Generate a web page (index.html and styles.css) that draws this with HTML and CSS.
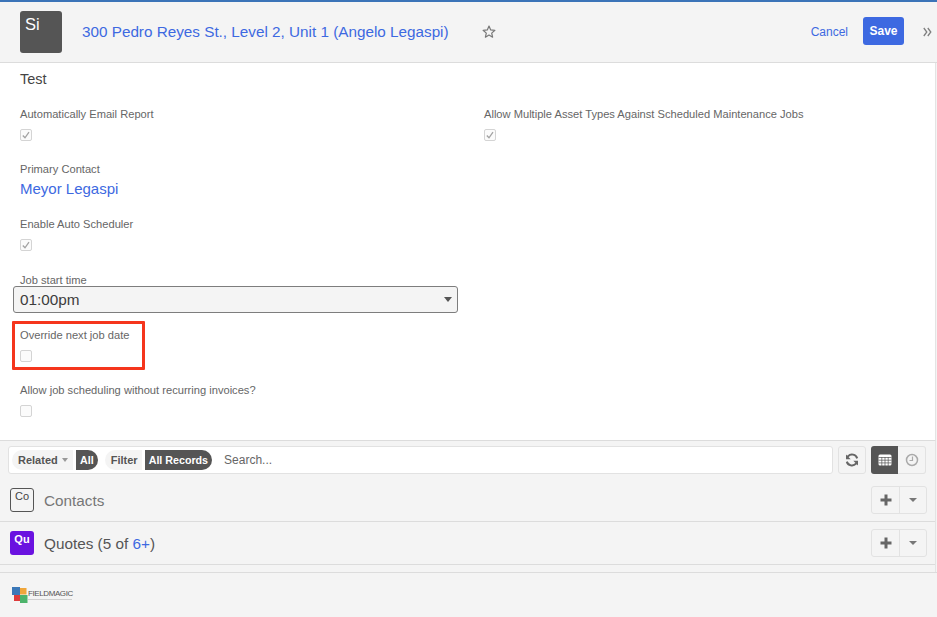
FILE: index.html
```html
<!DOCTYPE html>
<html lang="en">
<head>
<meta charset="utf-8">
<title>Site</title>
<link rel="stylesheet" href="styles.css">
</head>
<body>
<header class="topbar">
  <div class="avatar">Si</div>
  <a class="title">300 Pedro Reyes St., Level 2, Unit 1 (Angelo Legaspi)</a>
  <svg class="star" viewBox="0 0 14 14" width="14" height="14"><path d="M7 1l1.700 3.900 4.200.4-3.200 2.800.9 4.100L7 10.100l-3.600 2.100.9-4.100L1.100 5.300l4.200-.4z" fill="none" stroke="#777" stroke-width="1.200" stroke-linejoin="round"/></svg>
  <div class="actions">
    <a class="cancel">Cancel</a>
    <button class="save">Save</button>
    <svg class="chev" viewBox="0 0 9 10" width="9" height="10"><path d="M0.800 1l3 4-3 4M4.800 1l3 4-3 4" fill="none" stroke="#808080" stroke-width="1.300"/></svg>
  </div>
</header>
<main class="form">
  <div class="test">Test</div>
  <div class="grid">
    <div class="col">
      <div class="field">
        <label>Automatically Email Report</label>
        <span class="check"><svg viewBox="0 0 12 12" width="12" height="12"><path d="M2.800 6.500l2.200 2.300 4-5.600" fill="none" stroke="#a2a2a2" stroke-width="1.300"/></svg></span>
      </div>
      <div class="field">
        <label>Primary Contact</label>
        <a class="contact">Meyor Legaspi</a>
      </div>
      <div class="field">
        <label>Enable Auto Scheduler</label>
        <span class="check"><svg viewBox="0 0 12 12" width="12" height="12"><path d="M2.800 6.500l2.200 2.300 4-5.600" fill="none" stroke="#a2a2a2" stroke-width="1.300"/></svg></span>
      </div>
      <div class="field select-field">
        <label>Job start time</label>
        <div class="select">01:00pm<span class="caret"></span></div>
      </div>
      <div class="field">
        <label>Override next job date</label>
        <span class="check"></span>
        <span class="redbox"></span>
      </div>
      <div class="field">
        <label>Allow job scheduling without recurring invoices?</label>
        <span class="check"></span>
      </div>
    </div>
    <div class="col">
      <div class="field">
        <label>Allow Multiple Asset Types Against Scheduled Maintenance Jobs</label>
        <span class="check"><svg viewBox="0 0 12 12" width="12" height="12"><path d="M2.800 6.500l2.200 2.300 4-5.600" fill="none" stroke="#a2a2a2" stroke-width="1.300"/></svg></span>
      </div>
    </div>
  </div>
</main>
<section class="related">
  <div class="toolbar">
    <div class="searchbar">
      <span class="pill-l">Related<span class="mini-caret"></span></span><span class="pill-r">All</span>
      <span class="pill-l filter">Filter</span><span class="pill-r">All Records</span>
      <span class="search">Search...</span>
    </div>
    <button class="tool refresh"><svg viewBox="0 0 14 14" width="14" height="14"><path d="M12.200 5.400A5.400 5.400 0 0 0 3 3.300L1.800 4.500M1.800 8.600A5.400 5.400 0 0 0 11 10.700l1.200-1.200" fill="none" stroke="#666" stroke-width="2"/><path d="M1 1.500v4.700h4.700zM13 12.500V7.800H8.300z" fill="#666"/></svg></button>
    <div class="toggle">
      <span class="tg on"><svg viewBox="0 0 14 12" width="14" height="12"><rect x="0.500" y="0.500" width="13" height="11" rx="1.500" fill="#fff"/><path d="M0.500 3.500h13M0.500 6.200h13M0.500 8.900h13M3.800 3v9M7 3v9M10.200 3v9" stroke="#555" stroke-width="0.700"/></svg></span>
      <span class="tg"><svg viewBox="0 0 14 14" width="14" height="14"><circle cx="7" cy="7" r="5.500" fill="none" stroke="#aaa" stroke-width="1.500"/><path d="M7.500 3.500v4H4.500" fill="none" stroke="#aaa" stroke-width="1.200"/></svg></span>
    </div>
  </div>
  <div class="rel-row first">
    <span class="tile outline">Co</span>
    <span class="rel-name muted">Contacts</span>
    <div class="split"><span class="sp"><svg viewBox="0 0 12 12" width="12" height="12"><path d="M6 0.500v11M0.500 6h11" stroke="#666" stroke-width="3"/></svg></span><span class="sp"><span class="caret small"></span></span></div>
  </div>
  <div class="rel-row">
    <span class="tile purple">Qu</span>
    <span class="rel-name">Quotes (5 of <a>6+</a>)</span>
    <div class="split"><span class="sp"><svg viewBox="0 0 12 12" width="12" height="12"><path d="M6 0.500v11M0.500 6h11" stroke="#666" stroke-width="3"/></svg></span><span class="sp"><span class="caret small"></span></span></div>
  </div>
</section>
<footer class="footer">
  <div class="logo">
    <svg viewBox="0 0 16 16" width="16" height="16"><rect x="0" y="0" width="8" height="8" fill="#3b78b8"/><rect x="8" y="1" width="6.500" height="6.500" fill="#f0a63a"/><rect x="2" y="8" width="6" height="6" fill="#dd3b3b"/><rect x="8" y="8" width="7.500" height="8" fill="#4cb36a"/></svg>
    <div class="logo-text"><span class="logo-name">FIELDMAGIC</span><span class="logo-sub"></span></div>
  </div>
</footer>
</body>
</html>
```
FILE: styles.css
```css
* { box-sizing: border-box; }
html, body { margin: 0; padding: 0; }
body {
  width: 937px;
  height: 617px;
  overflow: hidden;
  background: #f4f4f4;
  font-family: "Liberation Sans", Arial, sans-serif;
  color: #444;
  display: flex;
  flex-direction: column;
}
a { color: #3d69e1; text-decoration: none; }
.topbar {
  height: 63px;
  flex: none;
  border-top: 2px solid #3b74b8;
  border-bottom: 1px solid #dcdcdc;
  background: #f4f4f4;
  display: flex;
  align-items: center;
  padding: 0 5px 0 20px;
}
.avatar {
  width: 42px;
  height: 42px;
  margin-bottom: 1px;
  background: #555;
  border-radius: 3px;
  color: #fff;
  font-size: 16.500px;
  line-height: 20px;
  padding: 3px 0 0 5px;
}
.title { margin: 0 0 2px 20px; font-size: 15.270px; white-space: nowrap; }
.star { margin-left: 33px; margin-bottom: 1px; }
.actions { margin-left: auto; display: flex; align-items: center; }
.cancel { font-size: 12px; }
.save {
  margin: 0 0 2px 15px;
  width: 41px;
  height: 28px;
  border: 0;
  padding: 0;
  border-radius: 3px;
  background: #3d69e1;
  color: #fff;
  font: bold 12px "Liberation Sans", Arial, sans-serif;
}
.chev { margin-left: 19px; }
.form {
  flex: none;
  width: 936px;
  height: 378px;
  background: #fff;
  padding: 7px 20px 0;
  border-bottom: 1px solid #dcdcdc;
  border-right: 1px solid #e4e4e4;
}
.test { font-size: 14.500px; line-height: 18px; color: #444; }
.grid { display: grid; grid-template-columns: 464px 1fr; margin-top: 19px; }
.col { display: flex; flex-direction: column; }
.field { height: 55px; position: relative; display: flex; flex-direction: column; align-items: flex-start; }
.field label { font-size: 11.140px; line-height: 14px; color: #666; white-space: nowrap; }
.check {
  margin-top: 8px;
  width: 12px;
  height: 12px;
  border: 1px solid #d4d4d4;
  border-radius: 2px;
  background: #fbfbfb;
  display: block;
  overflow: visible;
}
.check svg { display: block; margin: -1px; }
.contact { font-size: 15px; line-height: 18px; margin-top: 4px; }
.select-field { height: 56px; }
.select-field label { position: relative; top: 1px; }
.select {
  margin: 0 0 0 -7px;
  width: 445px;
  height: 27px;
  border: 1px solid #7d7d7d;
  border-radius: 3px;
  background: #f4f4f4;
  font-size: 15.300px;
  line-height: 25px;
  padding-left: 6px;
  color: #3c3c3c;
  position: relative;
}
.caret {
  position: absolute;
  right: 5px;
  top: 10px;
  width: 0;
  height: 0;
  border-left: 4.500px solid transparent;
  border-right: 4.500px solid transparent;
  border-top: 5px solid #555;
}
.caret.small { position: static; display: block; border-top-color: #777; border-top-width: 4px; }
.redbox {
  position: absolute;
  left: -8px;
  top: -7px;
  width: 133px;
  height: 49px;
  border: 3px solid #f5351c;
  border-radius: 1px;
}
.related { flex: none; width: 936px; height: 131px; border-right: 1px solid #e4e4e4; padding: 4px 9px 0 8px; }
.toolbar { display: flex; align-items: center; height: 29px; }
.searchbar {
  width: 825px;
  height: 28px;
  background: #fff;
  border: 1px solid #e2e2e2;
  border-radius: 3px;
  display: flex;
  align-items: center;
  padding-left: 3px;
  font-size: 11px;
}
.pill-l {
  height: 20px;
  line-height: 20px;
  padding: 0 0 0 6px;
  background: #f4f4f4;
  border-radius: 10px 0 0 10px;
  font-weight: bold;
  color: #555;
  display: flex;
  align-items: center;
  width: 61px;
}
.pill-l.filter { width: 37px; margin-left: 7px; }
.pill-r {
  height: 20px;
  line-height: 20px;
  margin-left: 3px;
  padding: 0 4px;
  background: #555;
  color: #fff;
  font-weight: bold;
  font-size: 10.700px;
  border-radius: 0 10px 10px 0;
}
.mini-caret { margin-left: 4px; border-left: 3.500px solid transparent; border-right: 3.500px solid transparent; border-top: 4px solid #999; }
.search { margin-left: 12px; font-size: 12px; color: #666; }
.tool {
  margin-left: 5px;
  width: 28px;
  height: 28px;
  padding: 0;
  background: #f4f4f4;
  border: 1px solid #e2e2e2;
  border-radius: 3px;
  display: flex;
  align-items: center;
  justify-content: center;
}
.toggle { margin-left: 5px; display: flex; }
.tg {
  width: 28px;
  height: 28px;
  display: flex;
  align-items: center;
  justify-content: center;
  border: 1px solid #e2e2e2;
  border-left: 0;
  border-radius: 0 3px 3px 0;
}
.tg.on { width: 27px; background: #555; border: 0; border-radius: 3px 0 0 3px; }
.rel-row {
  height: 43px;
  display: flex;
  align-items: center;
  border-bottom: 1px solid #dcdcdc;
  margin: 0 -9px 0 -8px;
  padding: 0 8px 0 10px;
}
.rel-row.first { height: 48px; padding-top: 5px; }
.tile {
  width: 24px;
  height: 24px;
  border-radius: 3px;
  font-size: 11px;
  line-height: 12px;
  text-align: center;
  padding-top: 2px;
  flex: none;
}
.tile.outline { border: 1px solid #555; color: #444; padding-top: 1px; }
.tile.purple { background: #6a12e0; color: #fff; font-weight: bold; }
.rel-name { margin: 2px 0 0 10px; font-size: 15.300px; color: #555; }
.rel-name.muted { color: #777; }
.split { margin-left: auto; display: flex; height: 28px; border: 1px solid #e2e2e2; border-radius: 3px; }
.sp { width: 27px; display: flex; align-items: center; justify-content: center; }
.sp + .sp { border-left: 1px solid #e2e2e2; }
.footer { flex: none; height: 45px; border-top: 1px solid #dcdcdc; padding: 14px 0 0 12px; }
.logo { display: flex; align-items: flex-start; }
.logo-text { margin: 3px 0 0 0; display: flex; flex-direction: column; }
.logo-name { font-size: 8px; line-height: 8px; letter-spacing: -0.400px; color: #555; white-space: nowrap; }
.logo-sub { width: 44px; height: 1px; margin-top: 1px; background: #d0d0d0; }
```
